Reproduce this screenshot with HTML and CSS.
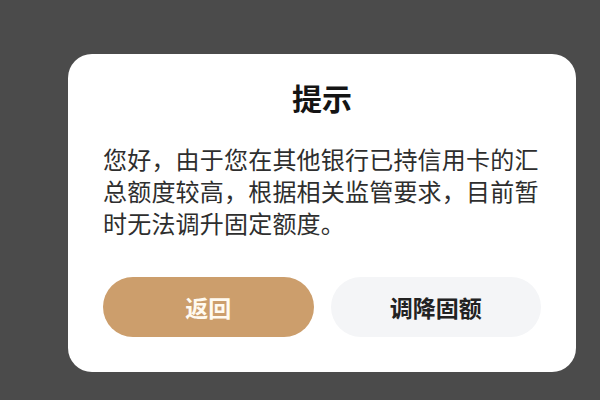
FILE: index.html
```html
<!DOCTYPE html>
<html lang="zh-CN">
<head>
<meta charset="utf-8">
<link rel="stylesheet" href="styles.css">
</head>
<body>
<div class="screen">
  <div class="dialog">
    <div class="title">提示</div>
    <div class="message">您好，由于您在其他银行已持信用卡的汇总额度较高，根据相关监管要求，目前暂时无法调升固定额度。</div>
    <div class="actions">
      <button class="btn btn-primary">返回</button>
      <button class="btn btn-secondary">调降固额</button>
    </div>
  </div>
</div>
</body>
</html>
```
FILE: styles.css
```css
html, body {
  margin: 0;
  padding: 0;
}
body {
  width: 600px;
  height: 400px;
  background: #4b4b4b;
  font-family: "Noto Sans CJK SC", "Noto Sans", sans-serif;
  overflow: hidden;
}
.screen {
  padding: 54px 0 0 68px;
}
.dialog {
  width: 508px;
  height: 318px;
  box-sizing: border-box;
  background: #ffffff;
  border-radius: 24px;
  padding: 23px 35px 35px 35px;
  display: flex;
  flex-direction: column;
}
.title {
  font-size: 30px;
  line-height: 40px;
  font-weight: 700;
  color: #141414;
  text-align: center;
}
.message {
  margin-top: 26px;
  font-size: 24px;
  line-height: 32px;
  letter-spacing: 0.2px;
  color: #2e2e2e;
}
.actions {
  margin-top: auto;
  display: flex;
  gap: 17px;
}
.btn {
  flex: 1;
  height: 60px;
  border: none;
  border-radius: 30px;
  font-family: inherit;
  font-size: 23px;
  font-weight: 700;
  padding: 0;
}
.btn-primary {
  background: #cc9e6c;
  color: #fffaf0;
}
.btn-secondary {
  background: #f4f5f7;
  color: #222222;
}
```
